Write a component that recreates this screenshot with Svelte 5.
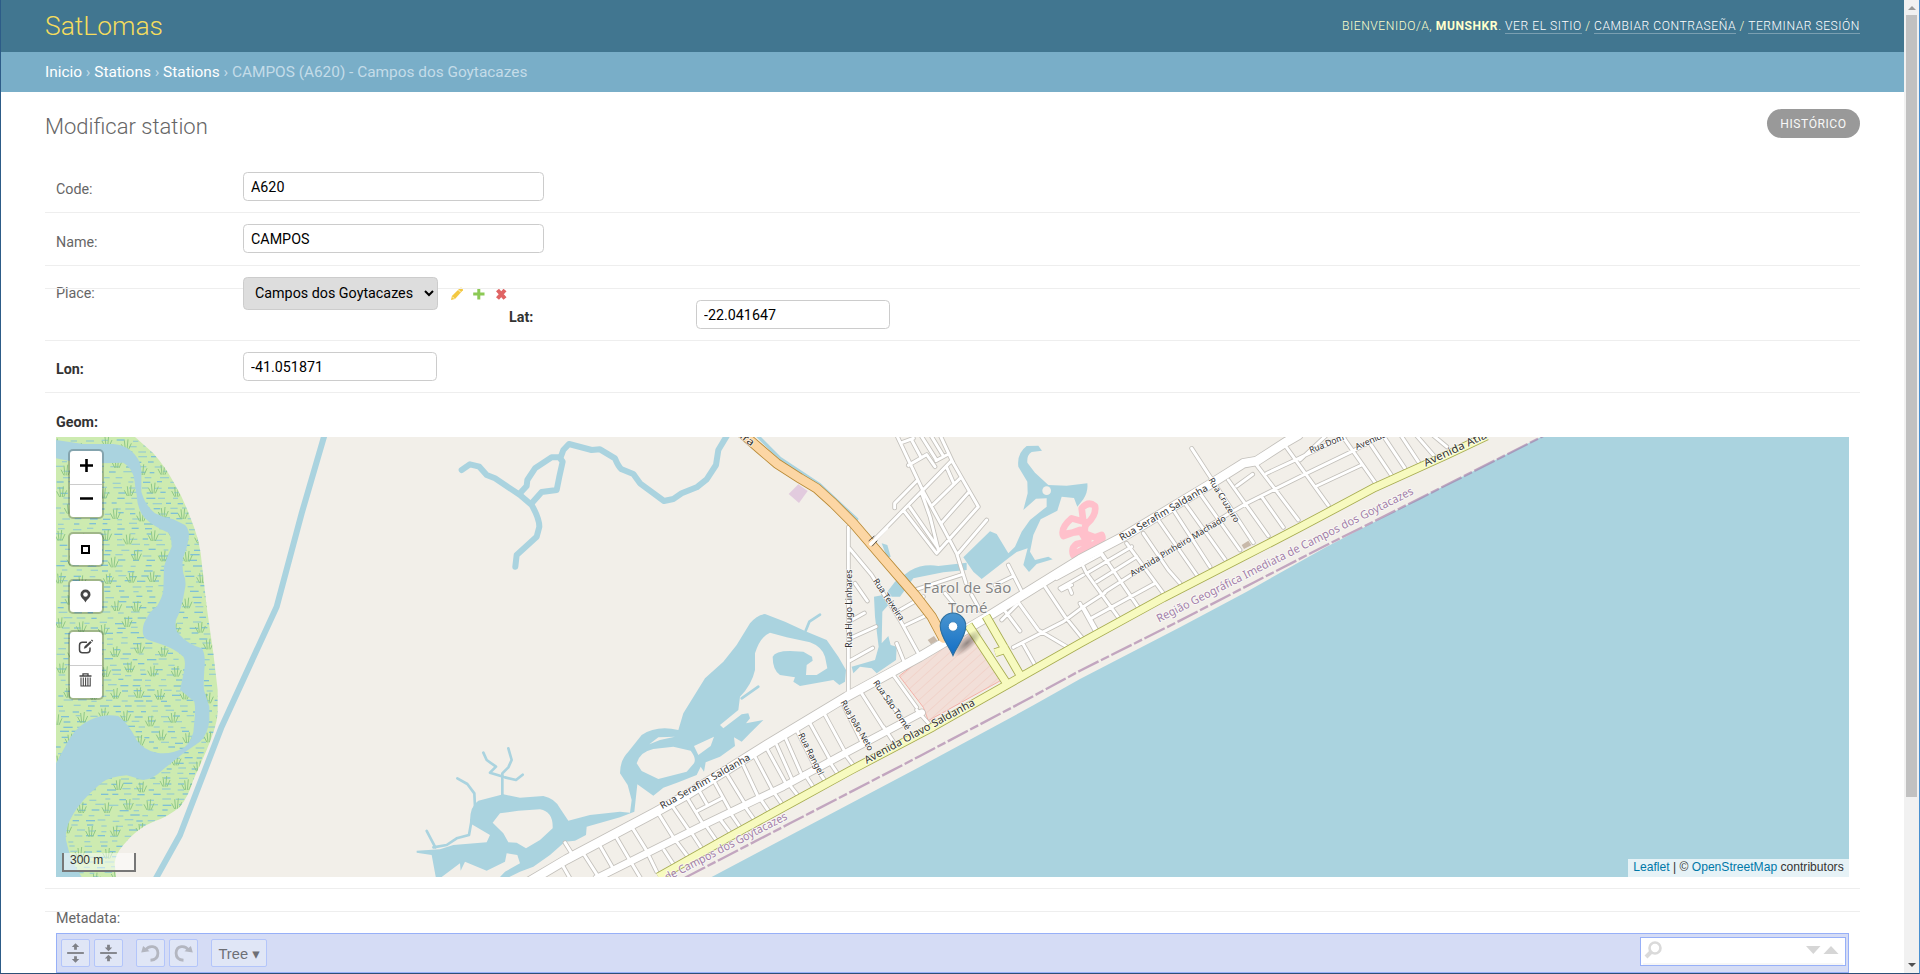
<script>
  const crumbs = ['Inicio', 'Stations', 'Stations'];

  // Map geometry: every list is drawn in one coordinate space, three units per pixel.
  const wetland = 'M48 21H285L340 70Q375 110 400 155Q430 205 450 260Q475 320 482 370L500 530L520 670L533 780V850Q530 890 500 960L460 1050Q445 1100 420 1130Q385 1160 340 1175Q290 1195 250 1245Q220 1280 225 1310L228 1341H48Z';
  const river = 'M48 30L130 42H220Q250 45 270 60Q302 85 304 120V185Q315 225 345 250Q370 263 400 268L435 285Q450 300 446 325Q440 360 430 380Q425 400 430 430Q440 455 435 475Q425 540 408 570Q402 600 420 615Q440 640 485 655Q498 670 493 720Q490 760 492 780L508 830V870Q505 910 480 935L430 970L370 1018Q340 1048 310 1050L260 1036Q210 1040 185 1058L150 1090Q110 1130 90 1170Q75 1200 78 1230Q90 1290 125 1341H48V1000L75 950Q105 890 150 870Q190 850 235 858Q265 880 290 930Q310 960 350 968Q390 975 430 955Q462 930 462 885Q468 840 463 815Q440 795 420 780L433 720Q438 690 430 680Q410 660 370 645L325 630Q300 620 312 580Q330 540 350 530Q368 500 370 480L372 410Q380 380 395 350Q395 320 385 308Q340 290 315 265Q292 240 290 195Q285 170 284 155Q280 115 250 98L180 100L100 95L48 85Z';
  const canal = 'M855 10L785 250L710 530L545 890L420 1215L345 1350';

  const creeks = [
    'M65 120L90 103L118 110L140 135L165 145L240 195L275 225Q298 265 298 290L290 320L230 375L226 410',
    'M240 190L260 168L262 150L285 115L335 82H358L368 95L358 140L350 180L305 186L275 220',
    'M362 82L370 60L387 42L455 60L480 58L525 85Q535 110 545 118L580 132L600 160L672 213L700 207L725 190L770 172L800 148L828 105L835 60L862 15'
  ];
  const brooks = [
    'M187 1100V1030L205 1012L215 990L205 955', 'M190 1040L150 1028L168 1010L140 990L130 968',
    'M195 1042L228 1050L248 1034', 'M105 1130L103 1090L82 1062L52 1045',
    'M95 1170L87 1215L50 1225L20 1245L-20 1252', 'M-40 1203L-14 1252',
    'M1097 602L1108 575L1140 554', 'M955 770L905 805'
  ];
  const lagoon = 'M975 552L1035 575L1100 605L1160 630L1195 680L1218 720L1215 755L1198 765L1180 750L1080 768L1060 755L1065 742L1020 735Q998 720 998 680Q1005 663 1050 663L1090 665L1116 680L1118 692L1100 705L1098 735H1130L1162 715L1155 680Q1145 650 1110 637L1040 622L990 608Q960 620 945 670V720Q935 765 900 800L895 840L840 885L850 895L905 853L925 850L930 865L918 880L970 870L930 910L905 935L882 922L885 948L840 980L797 997L792 1025L782 1010L770 1035L715 1057L670 1073L640 1097L592 1063L583 1145L540 1162L440 1190L438 1215L405 1232L375 1235L330 1275L280 1310L240 1325L200 1345H-12L-25 1275L-70 1268V1262L0 1258L40 1245L140 1237L150 1215L90 1180Q88 1130 115 1112L190 1093L240 1103L310 1098Q345 1105 360 1135L385 1172L450 1155L540 1145L570 1148L575 1110L563 1065L540 1030Q540 990 565 965L605 915Q650 885 715 900L730 850L795 745L850 695L890 645L930 580Q950 555 975 552ZM590 1000Q600 965 640 957L700 950L752 962Q770 985 762 1000L740 1025L655 1047L605 1023ZM628 943L655 922L705 920L660 930ZM762 948L822 920L812 948L775 975ZM158 1178L180 1150L235 1142L300 1138Q340 1145 338 1195L300 1230L258 1255L230 1238L205 1237L190 1210ZM62 1322L75 1295L140 1322L195 1295L200 1270L232 1275L240 1300L195 1325L180 1341H5L60 1300Z';
  const ponds = [
    'M222 500L265 492V525L247 545L245 640L265 618L272 645L290 650L288 690L230 730L215 715L180 710L160 730L155 710L225 690L236 650L225 560Z',
    'M262 485L285 455L330 422Q370 400 415 408L500 398V420L430 427L340 445L300 500L270 500Z',
    'M490 382L570 304L590 312L625 370L645 350L665 305L690 270L740 230V205L708 206L670 240L683 190L682 155L655 110Q650 70 680 48L715 47L726 62L695 66Q680 75 682 98L705 128L745 165L800 167L862 160Q865 185 850 208L832 230L822 204L785 200L772 242L722 268L700 315L690 365L705 390L745 380L758 388L710 402L687 426L670 405L683 355L650 366L625 385L545 447L520 425Z',
    'M245 340L262 345L272 380L262 385Z'
  ];
  const track = 'M790 312L840 305L885 322L905 315Q912 330 895 338L860 352L820 375Q812 355 830 342L860 335L840 300L790 318Q780 295 815 265L850 275L845 235Q865 212 885 228Q890 255 862 280Q845 295 865 330';

  const streets = [
    { at: 1080, w: 9, d: 'M145 292V790M148 355L215 435L300 570L355 670M165 460L202 513M150 573L193 549M150 625L228 590M150 692L218 654M300 540L370 500M318 585L385 553M350 478L485 434M290 640L312 695M290 15L370 185L430 295L470 370L498 460M325 106L380 74L405 110M305 38L340 25M335 30L362 80M362 15L408 88M392 15L430 78M420 15L460 100L535 230L410 370L312 243M330 232L415 355M455 92L215 338M440 112L460 157M350 153L284 220V234M365 190L390 260L415 360M480 145L400 223M505 188L425 278M560 270L475 370M408 92L440 75M435 490L460 520M515 495L540 540M625 405L668 490M585 465L640 438M605 530L660 603M650 510L715 600L800 650M605 570L650 525M735 470L795 560L850 628M640 652L790 575L850 530L915 488M668 640L705 705M785 480L815 465M805 465L815 490M845 400L860 430M905 375L912 385M850 530L890 600' },
    { at: 1920, w: 9, d: 'M-60 475L10 435M75 485L150 437L440 255L500 220L680 130L815 65L910 15M20 430L115 562M0 520L45 602M65 370L175 532M140 340L250 490M190 310L265 420L300 460M235 270L350 435M280 240L390 410M315 220L435 388M360 190L480 360M335 55L400 155L520 338M445 150L565 318M530 105L655 270M545 200L610 292M607 35L745 226M785 15L885 157M870 40L935 137M915 25L975 115M962 15L1015 95M1008 15L1060 75M1058 15L1100 50M560 130L650 88L800 15M710 168L845 105M28 568L225 460M-70 445L65 372M20 430L155 350M50 455L170 380M470 168L518 133M660 90L740 15' },
    { at: 0, w: 9, d: 'M375 1238L395 1270M370 1310L390 1345M433 1275L478 1345M480 1247L522 1320M525 1215L572 1295M575 1190L625 1270M655 1150L708 1235M695 1125L750 1205M738 1098L785 1175M775 1078L802 1125M820 1050L868 1137M772 1143L845 1105M862 1035L912 1117M905 995L952 1095M942 975L995 1075M980 955L1035 1055M1010 945L1055 1045M1037 925L1082 1027M1070 900L1125 1010M1110 880L1168 985M1155 855L1212 960M1205 815L1270 945M1265 790L1330 892M1310 765L1385 865M1360 735L1430 832M575 1300L602 1345M628 1280L650 1325M672 1260L700 1303M712 1238L742 1278M757 1212L783 1252M800 1190L828 1230M842 1170L870 1207M872 1150L898 1188M915 1130L940 1165M960 1105L985 1142M1000 1085L1023 1118M1045 1060L1070 1092M1093 1030L1117 1067M1130 1015L1152 1048M1165 990L1190 1027M1213 970L1237 1002M1330 890L1360 935M1430 840L1470 885' },
    { at: 0, w: 20, d: 'M470 1345L780 1190L1030 1070L1200 978L1445 848' },
    { at: 0, w: 26, d: 'M250 1365L380 1288L640 1150L740 1095L980 945L1220 800L1440 680L1630 568L1920 388L2050 320L2310 163L2410 100L2450 93L2540 35L2575 15' }
  ];
  const yellow = 'M655 1341L860 1225L1070 1110L1230 1022L1480 890L1620 810L1740 742L1920 640L2170 503L2400 385L2580 292L2805 172L3020 75L3140 18M1585 585L1697 755M1638 558L1740 735M1665 668L1705 655';
  const highway = 'M900 5L960 57L1010 100L1080 145L1130 175L1180 220L1240 280L1330 385L1425 495L1475 560L1510 625';

  const labels = [
    { x: 667, y: 1138, r: -29.5, s: 29, len: 305, t: 'Rua Serafim Saldanha' },
    { x: 2045, y: 333, r: -30.5, s: 29, len: 302, t: 'Rua Serafim Saldanha' },
    { x: 1280, y: 1002, r: -28.5, s: 32, len: 372, t: 'Avenida Olavo Saldanha' },
    { x: 2957, y: 110, r: -25, s: 32, len: 205, t: 'Avenida Atlâ' },
    { x: 2077, y: 440, r: -31, s: 26, len: 330, t: 'Avenida Pinheiro Machado' },
    { x: 2305, y: 150, r: 58.5, s: 26, len: 152, t: 'Rua Cruzeiro' },
    { x: 2612, y: 70, r: -22, s: 26, len: 110, t: 'Rua Dom' },
    { x: 2750, y: 60, r: -24, s: 26, len: 100, t: 'Avenida' },
    { x: 1235, y: 653, r: -90, s: 26, len: 234, t: 'Rua Hugo Linhares' },
    { x: 1298, y: 453, r: 56, s: 26, len: 146, t: 'Rua Teixeira' },
    { x: 1298, y: 758, r: 55, s: 26, len: 175, t: 'Rua São Tomé' },
    { x: 1201, y: 817, r: 60, s: 26, len: 170, t: 'Rua João Neto' },
    { x: 1074, y: 914, r: 63, s: 26, len: 138, t: 'Rua Rangel' },
    { x: 898, y: 22, r: 37, s: 30, len: 45, t: 'ira' }
  ];

  let seed = 7;
  const rnd = () => (seed = (seed * 16807) % 2147483647) / 2147483647;
  let dashes = '';
  let brightDashes = '';
  for (let y = 30; y < 1341; y += 15.6) {
    for (let x = 46 + rnd() * 30; x < 540; x += 34 + rnd() * 16) {
      const dash = `M${x.toFixed(0)} ${(y + rnd() * 5).toFixed(0)}h${(14 + rnd() * 14).toFixed(0)}`;
      if (rnd() > 0.5) dashes += dash;
      else brightDashes += dash;
    }
  }
  let tufts = '';
  for (let row = 0; row < 20; row++) {
    for (let col = 0; col < 8; col++) {
      const x = 40 + col * 70 + (row % 2) * 32 + rnd() * 20;
      const y = 45 + row * 68 + rnd() * 28;
      tufts += `M${x.toFixed(0)} ${y.toFixed(0)}l-9 -17m12 17l-3 -29m8 29l3 -32m1 32l9 -20`;
    }
  }
</script>

<div class="window">
  <div class="page">
    <header>
      <div class="brand">SatLomas</div>
      <div class="tools">Bienvenido/a, <strong>munshkr</strong>. <a href="#site">Ver el sitio</a> / <a href="#password">Cambiar contraseña</a> / <a href="#logout">Terminar sesión</a></div>
    </header>
    <nav>{#each crumbs as c}<a href="#crumb">{c}</a>{' › '}{/each}CAMPOS (A620) - Campos dos Goytacazes</nav>
    <main>
      <div class="titlebar"><h1>Modificar station</h1><a class="history" href="#history">Histórico</a></div>

      <div class="row first"><label for="code">Code:</label><input id="code" class="wide" value="A620" /></div>
      <div class="row name"><label for="name">Name:</label><input id="name" class="wide" value="CAMPOS" /></div>
      <div class="row place">
        <div class="rule"></div>
        <label for="place">Place:</label>
        <select id="place"><option>Campos dos Goytacazes</option></select>
        <div class="actions">
          <svg width="14" height="14" viewBox="0 0 14 14"><path d="M1 13l.9-4L9.500 1.400l.9-.7h1.300l1.200 1.300v1.200L5 12z" fill="#efb80b" opacity=".78" /><path d="M2.300 9.700l2 2M8.500 3l2.300 2.300" stroke="#fff" stroke-width=".8" /></svg>
          <svg width="14" height="14" viewBox="0 0 14 14"><path d="M5.300 1.500h3v4h4.200v3H8.300v4h-3v-4H1.200v-3h4.100z" fill="#8cc955" /></svg>
          <svg width="14" height="14" viewBox="0 0 14 14"><path d="M3.500 3l7.500 8.500M11 3L3.500 11.500" stroke="#e06464" stroke-width="4" /></svg>
        </div>
        <label class="bold lat" for="lat">Lat:</label><input id="lat" class="num latin" value="-22.041647" />
      </div>
      <div class="row lon"><label class="bold" for="lon">Lon:</label><input id="lon" class="num" value="-41.051871" /></div>

      <div class="geom">
        <div class="bold cap">Geom:</div>
        <div class="map">
          <svg class="canvas" viewBox="56 437 1793 440" width="1793" height="440">
            <defs>
              <clipPath id="wet"><path d={wetland} /></clipPath>
              <pattern id="hatch" width="22" height="22" patternUnits="userSpaceOnUse" patternTransform="rotate(48)"><path d="M0 0V22" stroke="#f0c3ba" stroke-width="2.500" /></pattern>
              <linearGradient id="pin" x1="0" y1="0" x2="0" y2="1"><stop offset="0" stop-color="#4a95cf" /><stop offset="1" stop-color="#126fc6" /></linearGradient>
              <radialGradient id="shade"><stop offset="0" stop-color="#000" stop-opacity=".4" /><stop offset="1" stop-color="#000" stop-opacity="0" /></radialGradient>
            </defs>
            <g transform="translate(440 430) scale(.333333)">
              <g transform="translate(-1200 0)">
                <path d={wetland} fill="#cdebb0" />
                <g clip-path="url(#wet)" fill="none"><path d={dashes} stroke="#8cc6d6" stroke-width="3.200" /><path d={brightDashes} stroke="#66b2e2" stroke-width="3.200" /><path d={tufts} stroke="#8fc787" stroke-width="3" /></g>
                <path d={river} fill="#aad3df" />
                <path d={canal} fill="none" stroke="#aad3df" stroke-width="18" stroke-linejoin="round" />
              </g>
              <path d="M815 1341L1440 1010L1780 826L1920 747L2220 592L2420 485L2660 350L2940 205L3305 20H4230V1345Z" fill="#aad3df" />
              <g fill="none" stroke="#aad3df" stroke-linecap="round" stroke-linejoin="round">
                {#each creeks as d}<path {d} stroke-width="18" />{/each}
                {#each brooks as d}<path {d} stroke-width="8" />{/each}
                <path d="M950 15L1020 85L1140 165L1250 268" stroke-width="10" />
              </g>
              <path d={lagoon} fill="#aad3df" fill-rule="evenodd" />
              <g transform="translate(1080 0)">
                {#each ponds as d}<path {d} fill="#aad3df" />{/each}
                <circle cx="740" cy="182" r="13" fill="#f2efe9" />
                <path d={track} fill="none" stroke="#ffc0cb" stroke-width="20" stroke-linejoin="round" stroke-linecap="round" />
              </g>
              <path d="M1046 192L1075 163L1103 183L1077 219Z" fill="#e2cbde" />
              <path d="M1378 738L1440 690L1585 610L1685 750L1465 872L1450 832Z" fill="#f2dfd8" />
              <path d="M1378 738L1440 690L1585 610L1685 750L1465 872L1450 832Z" fill="url(#hatch)" stroke="#f4b0a8" stroke-width="3" />
              <path d="M1463 630L1482 618L1492 632L1473 643ZM2405 345L2425 332L2434 346L2412 357Z" fill="#c8b9aa" />

              <g fill="none" stroke="#c3c0bb" stroke-linecap="round" stroke-linejoin="round">
                {#each streets as s}<path d={s.d} transform={`translate(${s.at} 0)`} stroke-width={s.w + 5} />{/each}
              </g>
              <g fill="none" stroke="#fff" stroke-linecap="round" stroke-linejoin="round">
                {#each streets as s}<path d={s.d} transform={`translate(${s.at} 0)`} stroke-width={s.w} />{/each}
              </g>
              <path d={yellow} fill="none" stroke="#a7ac50" stroke-width="27" stroke-linejoin="round" />
              <path d={yellow} fill="none" stroke="#f7fabf" stroke-width="22" stroke-linejoin="round" />
              <path d={highway} fill="none" stroke="#b98a36" stroke-width="31" stroke-linejoin="round" />
              <path d={highway} fill="none" stroke="#fcd6a4" stroke-width="26" stroke-linejoin="round" stroke-linecap="round" />
              <path d="M1292 342L1340 295" stroke="#fff" stroke-width="10" stroke-linecap="round" />
              <path d="M1286 333L1303 318M1296 349L1312 332" stroke="#555" stroke-width="3" />
              <path d="M735 1343L1050 1180L1440 978L1740 820L1920 722L2200 582L2440 458L2660 345L2940 205L3310 18" fill="none" stroke="#a274a3" opacity=".6" stroke-width="7" stroke-dasharray="68 8 27 8" />

              <g class="names">
                {#each labels as l}<text transform={`translate(${l.x} ${l.y}) rotate(${l.r})`} font-size={l.s} textLength={l.len} lengthAdjust="spacingAndGlyphs">{l.t}</text>{/each}
                <g fill="#a27ea8">
                  <text transform="translate(2157 578) rotate(-26.8)" font-size="34" textLength="858" lengthAdjust="spacingAndGlyphs">Região Geográfica Imediata de Campos dos Goytacazes</text>
                  <text transform="translate(681 1354) rotate(-27.300)" font-size="34" textLength="409" lengthAdjust="spacingAndGlyphs">de Campos dos Goytacazes</text>
                </g>
                <g fill="#858585" text-anchor="middle" font-size="45">
                  <text x="1582" y="489" textLength="264">Farol de São</text>
                  <text x="1583" y="549" textLength="118">Tomé</text>
                </g>
              </g>
            </g>
            <ellipse cx="967" cy="643" rx="19" ry="7" transform="rotate(-42 967 643)" fill="url(#shade)" />
            <path d="M953 655.500C949.500 647 940.200 636.500 940.200 626A12.800 13 0 0 1 965.800 626C965.800 636.500 956.500 647 953 655.500Z" fill="url(#pin)" stroke="#2c6f9f" stroke-width="1.100" />
            <circle cx="953" cy="626.500" r="4.700" fill="#fff" stroke="#2d79b5" stroke-width=".8" />
          </svg>

          <div class="controls">
            <div class="bar zoom"><span><svg viewBox="0 0 33 33"><path d="M11 16.500h13M17.500 10v13" stroke="#000" stroke-width="2.600" /></svg></span><span><svg viewBox="0 0 33 33"><path d="M11 16.500h13" stroke="#000" stroke-width="2.600" /></svg></span></div>
            <div class="bar one a"><span><svg viewBox="0 0 33 33"><path d="M13 13h7v7h-7z" fill="none" stroke="#000" stroke-width="2" /></svg></span></div>
            <div class="bar one b"><span><svg viewBox="0 0 33 33"><path d="M16.500 22.500C15.500 19.500 11.500 18 11.500 14.500a5 5 0 0 1 10 0C21.500 18 17.500 19.500 16.500 22.500z" fill="#464646" /><circle cx="16.500" cy="14.500" r="2.300" fill="#fff" /></svg></span></div>
            <div class="bar c"><span><svg viewBox="0 0 33 33"><path d="M18 11.200h-4.500a3 3 0 0 0-3 3v4.500a3 3 0 0 0 3 3h4.500a3 3 0 0 0 3-3V16.500" fill="none" stroke="#464646" stroke-width="1.500" /><path d="M14.800 17.700l.8-2.500 5.700-5.300 1.500 1.500-5.700 5.500zM21.900 9.200l1-.8 1.300 1.300-.8 1z" fill="#464646" /></svg></span><span><svg viewBox="0 0 33 33"><path d="M10.500 11h12M14 10.500V8.800h5v1.700" fill="none" stroke="#464646" stroke-width="1.300" /><path d="M12 12.500v8.500h9.200v-8.500M14.300 12.500v8.500M16.600 12.500v8.500M18.900 12.500v8.500" fill="none" stroke="#464646" stroke-width="1.100" /></svg></span></div>
          </div>
          <div class="scale">300 m</div>
          <div class="credit"><a href="#leaflet">Leaflet</a> | © <a href="#osm">OpenStreetMap</a> contributors</div>
        </div>
      </div>

      <div class="metadata">
        <div class="cap">Metadata:</div>
        <div class="editor">
          <button aria-label="Expand all"><svg viewBox="0 0 28 28"><path d="M5 14h18" stroke="#7f8187" stroke-width="2" /><path d="M14 3.500l4 4h-2.500v3h-3v-3H10zM14 24.500l4-4h-2.500v-3h-3v3H10z" fill="#7f8187" /></svg></button>
          <button aria-label="Collapse all"><svg viewBox="0 0 28 28"><path d="M5 14h18" stroke="#7f8187" stroke-width="2" /><path d="M14 12l4-4h-2.500V5h-3v3H10zM14 16l4 4h-2.500v3h-3v-3H10z" fill="#7f8187" /></svg></button>
          <button class="gap" aria-label="Undo"><svg viewBox="0 0 28 28"><path d="M9 10.500C12 5.500 21.500 5.500 22 14c0 5-3 7.500-8 7.800" fill="none" stroke="#b3b6c0" stroke-width="3" /><path d="M4 13.500L6 6.500l7 5.500z" fill="#b3b6c0" /></svg></button>
          <button aria-label="Redo"><svg viewBox="0 0 28 28"><path d="M19 10.500C16 5.500 6.500 5.500 6 14c0 5 3 7.500 8 7.800" fill="none" stroke="#b3b6c0" stroke-width="3" /><path d="M24 13.500L22 6.500l-7 5.500z" fill="#b3b6c0" /></svg></button>
          <button class="gap tree">Tree ▾</button>
          <div class="search"><svg width="204" height="27" viewBox="0 0 204 27"><circle cx="14" cy="10" r="5.500" fill="none" stroke="#dadada" stroke-width="2.600" /><path d="M10 14l-5 5" stroke="#dadada" stroke-width="4" /><path d="M165 8h14.500l-7.200 8zM182.500 16h15l-7.500-8z" fill="#d6d6d6" /><path d="M2 26h200" stroke="#eee" /></svg></div>
        </div>
      </div>
    </main>
  </div>
  <div class="scrollbar"><i class="up"></i><div class="thumb"></div><i class="down"></i></div>
</div>

<style>
  :global(body) { margin: 0; overflow: hidden; background: #fff; }
  .window { width: 1920px; height: 974px; box-sizing: border-box; display: flex; border-left: 1px solid #2d5c88; border-right: 1px solid #4a90d0; border-bottom: 1px solid #2d5077; overflow: hidden; font: 14.300px Roboto, sans-serif; color: #333; }
  .page { width: 1903px; height: 973px; overflow: hidden; }
  a { text-decoration: none; }
  header { height: 52px; padding: 0 44px; background: #417690; display: flex; justify-content: space-between; align-items: center; }
  .brand { font-size: 26.400px; font-weight: 300; color: #f5dd5d; }
  .tools { font-size: 12.100px; font-weight: 300; letter-spacing: .55px; text-transform: uppercase; color: #ffc; }
  .tools strong { font-weight: 700; }
  .tools a { color: #fff; border-bottom: 1px solid rgba(255,255,255,.3); }
  nav { height: 40px; line-height: 40px; box-sizing: border-box; padding: 0 44px; background: #79aec8; color: #c4dce8; font-size: 15.400px; white-space: pre; }
  nav a { color: #fff; }
  main { padding: 0 44px; }
  .titlebar { display: flex; justify-content: space-between; height: 70px; padding-top: 17px; box-sizing: border-box; }
  h1 { margin: 5px 0 0; font-size: 22px; line-height: 26px; font-weight: 300; color: #666; }
  .history { width: 93px; height: 29px; line-height: 30px; border-radius: 15px; background: #999; color: #f8f8f8; font-size: 12.100px; letter-spacing: .55px; text-transform: uppercase; text-align: center; }
  .row { display: flex; align-items: flex-start; padding: 11px 11px 0; box-sizing: border-box; border-bottom: 1px solid #eee; }
  .first { height: 51px; padding-top: 10px; }
  .name { height: 53px; padding-top: 11px; }
  .place { height: 75px; padding-top: 11px; position: relative; }
  .lon { height: 52px; }
  .rule { position: absolute; left: 0; right: 0; top: 22px; height: 1px; background: #eee; }
  label { width: 187px; flex: none; line-height: 17px; padding-top: 9px; color: #666; }
  .name label { padding-top: 10px; }
  .place label { padding-top: 8px; }
  .bold { font-weight: 700; color: #333; }
  input { height: 29px; box-sizing: border-box; border: 1px solid #ccc; border-radius: 4.400px; padding: 0 7px; font: 14.300px Roboto, sans-serif; color: #000; background: #fff; }
  .wide { width: 301px; }
  .num { width: 194px; }
  select { width: 195px; height: 33px; box-sizing: border-box; border: 1px solid #ccc; border-radius: 4.400px; background: #ddd; padding: 0 7px 1px; font: 14.300px Roboto, sans-serif; color: #000; position: relative; }
  .actions { width: 71px; display: flex; gap: 8px; padding: 10px 0 0 12px; box-sizing: border-box; }
  .actions svg { flex: none; }
  .place .lat { padding-top: 32px; }
  .latin { margin-top: 23px; }
  .geom { height: 496px; padding: 21px 11px 0; box-sizing: border-box; border-bottom: 1px solid #eee; }
  .cap { height: 23px; line-height: 17px; }
  .map { position: relative; width: 1793px; height: 440px; background: #f2efe9; overflow: hidden; }
  .canvas { display: block; }
  .names text { font-family: "Noto Sans", sans-serif; paint-order: stroke; stroke: rgba(255,255,255,.65); stroke-width: 5px; }
  .names { fill: #333; }
  .controls { position: absolute; left: 12px; top: 12px; width: 35px; }
  .bar { box-sizing: border-box; width: 36px; border: 2px solid rgba(0,0,0,.22); border-radius: 5px; background: #fff; background-clip: padding-box; overflow: hidden; height: 70px; display: flex; flex-direction: column; }
  .bar span { flex: 1; min-height: 0; display: flex; justify-content: center; }
  .bar span + span { border-top: 1px solid #ccc; }
  .bar svg { width: 33px; height: 33px; flex: none; margin: -1px 0 0 -1px; }
  .zoom svg { margin-top: -2.500px; }
  .one { height: 35px; }
  .a { margin-top: 13px; } .b { margin-top: 12px; } .c { margin-top: 16px; }
  .scale { position: absolute; left: 6px; bottom: 5px; width: 74px; height: 19px; box-sizing: border-box; border: 2px solid #777; border-top: 0; background: rgba(255,255,255,.5); font: 12px/15px "Liberation Sans", sans-serif; padding-left: 6px; }
  .credit { position: absolute; right: 0; bottom: 0; width: 221px; height: 18px; box-sizing: border-box; background: rgba(255,255,255,.7); font: 12.100px/17px "Liberation Sans", sans-serif; text-align: center; white-space: nowrap; }
  .credit a { color: #0078a8; }
  .metadata { margin-top: 22px; border-top: 1px solid #eee; padding: 0 11px; color: #666; }
  .metadata .cap { height: 21px; line-height: 12px; }
  .editor { box-sizing: border-box; height: 40px; border: 1px solid #97b0f8; background: #d5dcf5; display: flex; gap: 4px; padding: 5px 2px 0 4px; }
  button { width: 29px; height: 28px; box-sizing: border-box; padding: 0; border: 1px solid #b3c5fa; border-radius: 2px; background: #e0e6f6; flex: none; font: 14.700px "Liberation Sans", "DejaVu Sans", sans-serif; color: #6d6f75; }
  button svg { display: block; width: 27px; height: 26px; }
  .gap { margin-left: 9px; }
  .tree { width: 56px; }
  .search { margin: -2px 0 0 auto; width: 206px; height: 29px; box-sizing: border-box; border: 1px solid #97b0f8; background: #fff; }
  .scrollbar { width: 15px; height: 973px; background: #f1f1f1; display: flex; flex-direction: column; align-items: center; }
  .thumb { width: 11px; height: 782px; background: #c1c1c1; margin-top: 5px; }
  i { border: 4px solid transparent; }
  .up { border-top: 0; border-bottom-color: #999; margin-top: 6px; }
  .down { border-bottom: 0; border-top-color: #505050; margin-top: auto; margin-bottom: 6px; }
</style>
